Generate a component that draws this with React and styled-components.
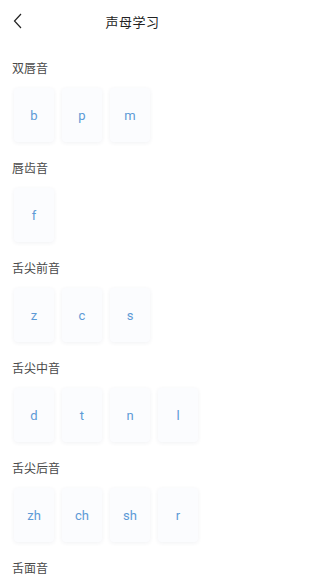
import styled, { createGlobalStyle } from "styled-components";

const GlobalStyle = createGlobalStyle`
  html, body {
    margin: 0;
    padding: 0;
    background: #ffffff;
    font-family: "Noto Sans CJK SC", "Noto Sans", sans-serif;
  }
`;

const Page = styled.div`
  width: 265px;
  height: 574px;
  overflow: hidden;
  background: #ffffff;
`;

const Header = styled.header`
  height: 42px;
  display: flex;
  align-items: center;
  justify-content: center;
  position: relative;
`;

const BackButton = styled.button`
  position: absolute;
  left: 8px;
  top: 11px;
  width: 20px;
  height: 20px;
  padding: 0;
  border: none;
  background: none;
  display: flex;
  align-items: center;
  justify-content: center;
`;

const Title = styled.h1`
  margin: 0;
  font-size: 13px;
  font-weight: 400;
  color: #222222;
  letter-spacing: 0.5px;
`;

const Section = styled.section`
  padding: 18px 0 0 12px;
`;

const Label = styled.div`
  font-size: 12px;
  line-height: 16px;
  color: #4a4a4a;
`;

const Cards = styled.div`
  display: flex;
  gap: 8px;
  padding: 12px 0 0 2px;
`;

const Card = styled.div`
  width: 40px;
  height: 54px;
  border-radius: 4px;
  background: #fbfcfe;
  box-shadow: 0 1px 4px rgba(40, 60, 90, 0.07);
  display: flex;
  align-items: center;
  justify-content: center;
  font-family: Roboto, "Liberation Sans", sans-serif;
  font-size: 13px;
  font-weight: 400;
  color: #5d9ad6;
`;

const groups = [
  { name: "双唇音", letters: ["b", "p", "m"] },
  { name: "唇齿音", letters: ["f"] },
  { name: "舌尖前音", letters: ["z", "c", "s"] },
  { name: "舌尖中音", letters: ["d", "t", "n", "l"] },
  { name: "舌尖后音", letters: ["zh", "ch", "sh", "r"] },
  { name: "舌面音", letters: ["j", "q", "x"] },
];

export default function App() {
  return (
    <Page>
      <GlobalStyle />
      <Header>
        <BackButton type="button" aria-label="返回">
          <svg width="10" height="16" viewBox="0 0 10 16" fill="none">
            <polyline points="8,1 1.5,8 8,15" stroke="#222" strokeWidth="1.2" />
          </svg>
        </BackButton>
        <Title>声母学习</Title>
      </Header>
      {groups.map((g) => (
        <Section key={g.name}>
          <Label>{g.name}</Label>
          <Cards>
            {g.letters.map((l) => (
              <Card key={l}>{l}</Card>
            ))}
          </Cards>
        </Section>
      ))}
    </Page>
  );
}
